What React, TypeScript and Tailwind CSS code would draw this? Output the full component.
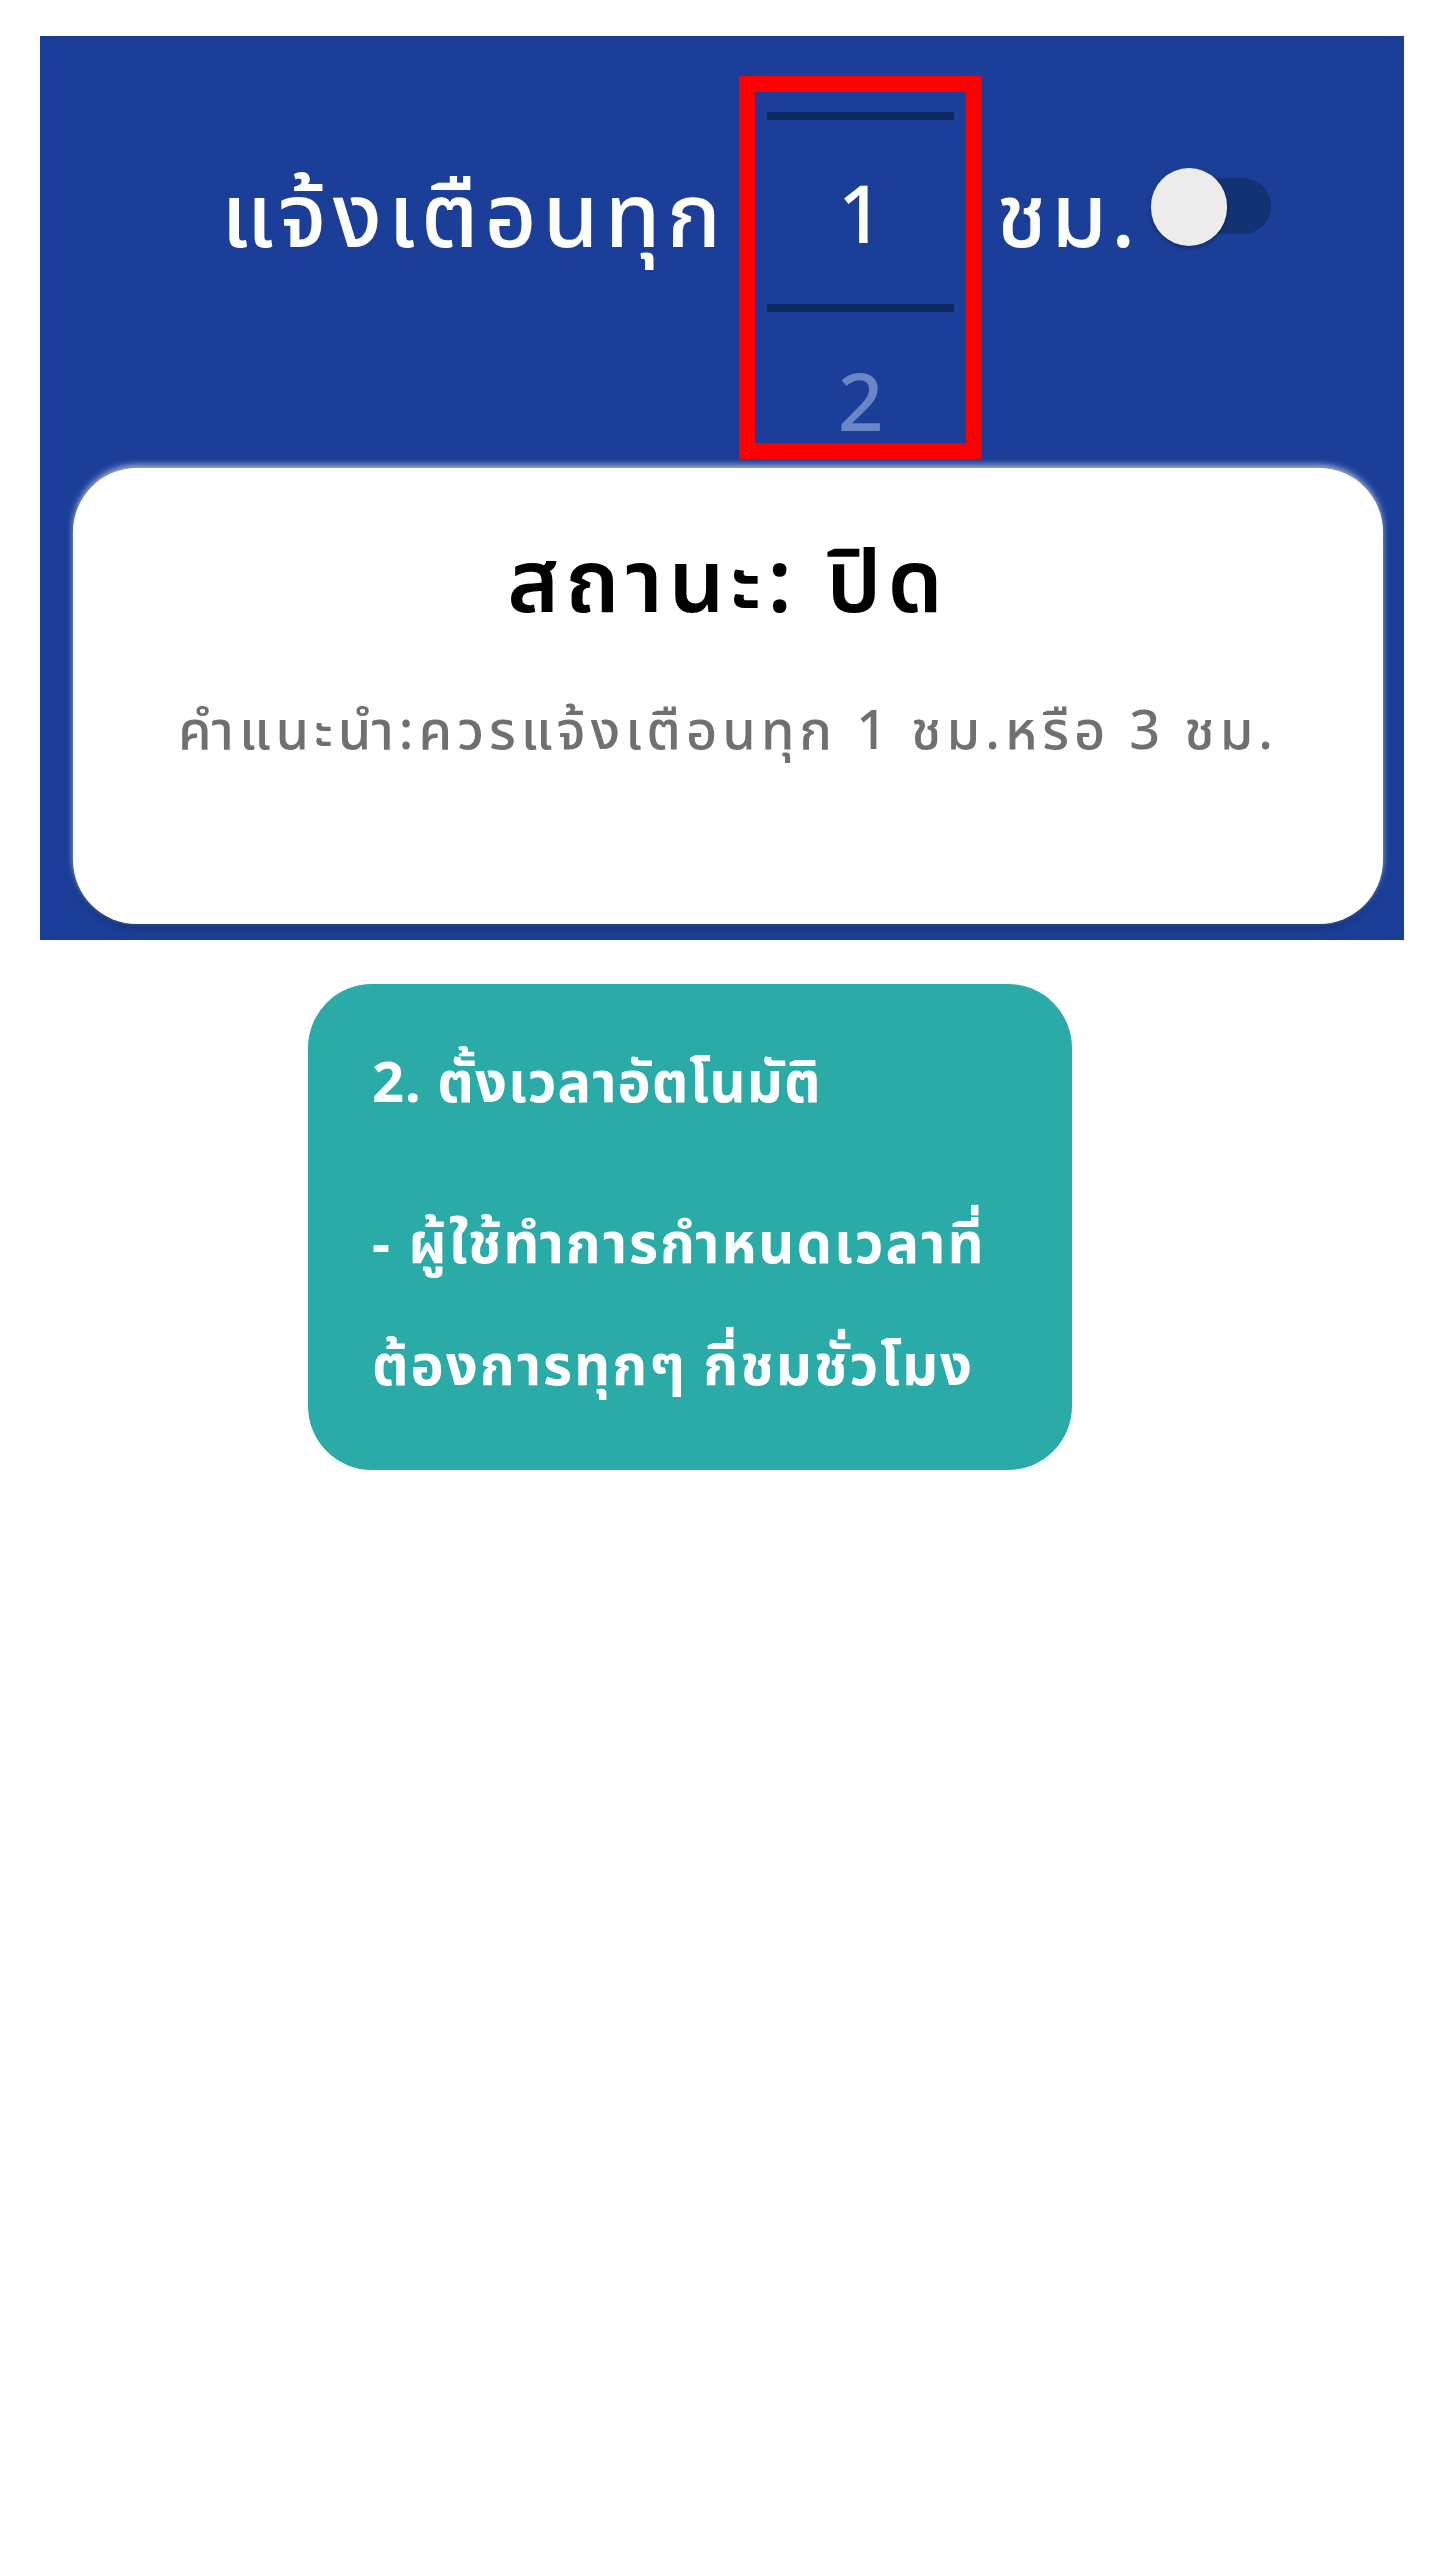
import React from "react";

const thai = { fontFamily: '"Noto Sans", "Noto Sans Thai", "Liberation Sans", sans-serif' };

const HourPicker = ({ value = 1, next = 2 }: { value?: number; next?: number }) => (
  <div className="w-[243px] h-[383px] border-[16px] border-[#ff0000] shrink-0">
    <div className="h-[351px] px-[12px] pt-[20px]">
      <div className="h-[8px] bg-[#0c285f]" />
      <div className="h-[184px] flex items-center justify-center text-[80px] leading-none font-medium text-white">
        {value}
      </div>
      <div className="h-[8px] bg-[#0c285f]" />
      {/* next value, partly scrolled into view */}
      <div className="h-[130px] pt-[48px] text-center text-[80px] leading-none font-medium text-[#6b86c6]">
        {next}
      </div>
    </div>
  </div>
);

const Toggle = () => (
  <div className="relative w-[120px] h-[80px] ml-[12px] mt-[92px] shrink-0">
    <div className="absolute left-[14px] top-[10px] w-[106px] h-[56px] rounded-full bg-[#133274]" />
    <div className="absolute left-0 top-0 w-[76px] h-[78px] rounded-full bg-[#ececec] shadow-[0_2px_4px_rgba(0,0,0,0.35)]" />
  </div>
);

export default function App() {
  return (
    <div className="w-[1440px] min-h-[2560px] bg-white pt-[36px]" style={thai}>
      <div className="ml-[40px] w-[1364px] bg-[#1b3f99] pt-[40px] pb-[16px]">
        <div className="flex items-start pl-[181px]">
          <div className="mt-[86px] mr-[12px] text-[90px] leading-[100px] font-medium tracking-[6px] text-white whitespace-nowrap">
            แจ้งเตือนทุก
          </div>
          <HourPicker />
          <div className="mt-[86px] ml-[14px] text-[90px] leading-[100px] font-medium tracking-[4px] text-white whitespace-nowrap">
            ชม.
          </div>
          <Toggle />
        </div>
        <div className="ml-[33px] mt-[9px] w-[1310px] h-[456px] rounded-[64px] bg-white shadow-[0_-3px_6px_rgba(180,195,225,0.9),0_4px_8px_rgba(0,0,0,0.25)] flex flex-col items-center pt-[54px]">
          <div className="text-[88px] leading-[112px] font-semibold tracking-[6px] text-black">สถานะ: ปิด</div>
          <div className="mt-[58px] text-[54px] leading-[72px] font-medium tracking-[5px] text-[#707070]">
            คำแนะนำ:ควรแจ้งเตือนทุก 1 ชม.หรือ 3 ชม.
          </div>
        </div>
      </div>
      <div className="ml-[308px] mt-[44px] w-[764px] h-[486px] rounded-[64px] bg-[#2aaba8] pl-[64px] pr-[30px] pt-[66px] text-white font-bold">
        <div className="text-[56px] leading-[60px] tracking-[1px]">2. ตั้งเวลาอัตโนมัติ</div>
        <div className="mt-[70px] text-[56px] leading-[122px] tracking-[2px]">
          - ผู้ใช้ทำการกำหนดเวลาที่
          <br />
          ต้องการทุกๆ กี่ชมชั่วโมง
        </div>
      </div>
    </div>
  );
}
